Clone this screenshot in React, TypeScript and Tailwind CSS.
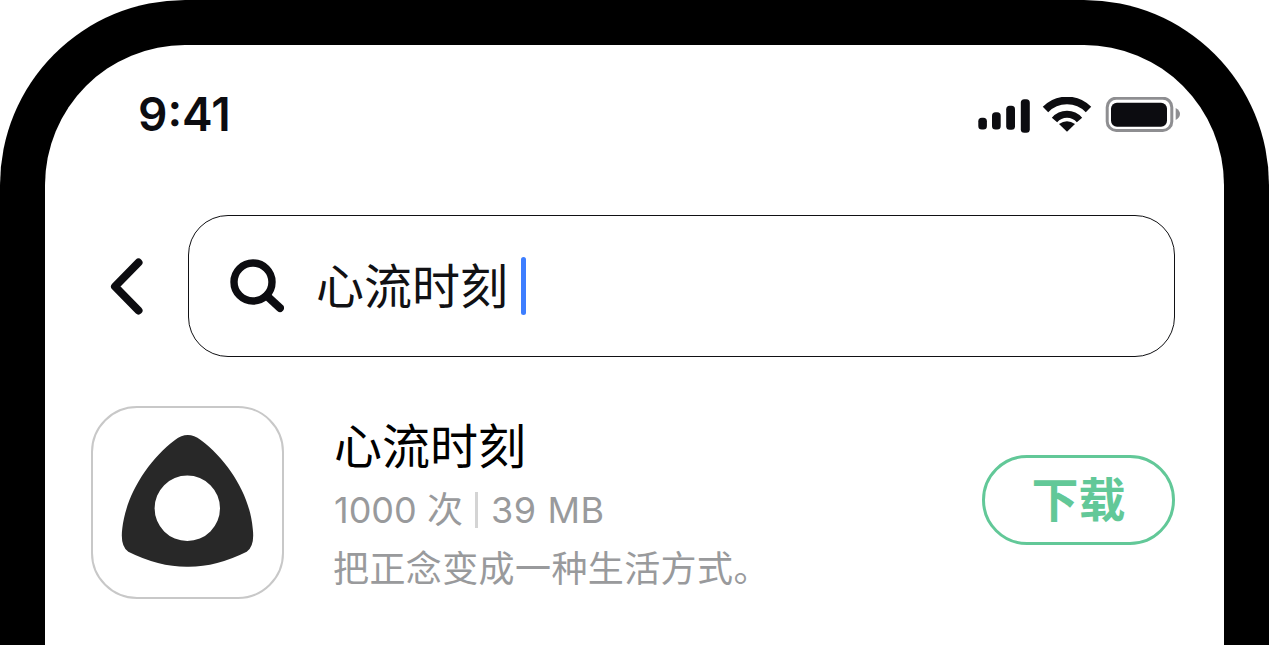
export default function App() {
  return (
    <div className="w-[1269px] h-[645px] overflow-hidden bg-white font-['Inter','Noto_Sans_CJK_SC',sans-serif]">
      <div className="h-full rounded-t-[185px] bg-black px-[45px] pt-[45px]">
        <div className="h-[600px] rounded-t-[140px] bg-white">
          {/* status bar */}
          <div className="h-[170px] pl-[93px] pr-[44px] pt-[44px] flex items-start justify-between">
            <span className="text-[46px] leading-[50px] font-semibold text-[#0c0c10]">9:41</span>
            <svg className="mt-[8px]" width="202" height="36" viewBox="978 97 202 36">
              <rect x="978.3" y="117.7" width="8.6" height="11.8" rx="3.5" fill="#0c0c10" />
              <rect x="992" y="112.3" width="8.7" height="17.2" rx="3.5" fill="#0c0c10" />
              <rect x="1006.2" y="105.7" width="8.8" height="24" rx="3.5" fill="#0c0c10" />
              <rect x="1020.8" y="99.3" width="9" height="33.4" rx="3.5" fill="#0c0c10" />
              <path d="M1045.5 109.5 A30 30 0 0 1 1088.5 109.5" fill="none" stroke="#0c0c10" strokeWidth="7.6" />
              <path d="M1054.5 120 A16.5 16.5 0 0 1 1079.5 120" fill="none" stroke="#0c0c10" strokeWidth="7" />
              <path d="M1067 131.7 L1059 124 Q1067 118.5 1075 124 Z" fill="#0c0c10" />
              <rect x="1107.2" y="98.2" width="64.6" height="32.2" rx="9" fill="none" stroke="#8e8e91" strokeWidth="3" />
              <rect x="1111" y="102.7" width="56" height="24" rx="6" fill="#0c0c10" />
              <path d="M1175.7 108 Q1180 110.5 1180 114 Q1180 117.5 1175.7 120 Z" fill="#8e8e91" />
            </svg>
          </div>

          {/* search row */}
          <div className="flex items-center pl-[65px] pr-[49px]">
            <svg className="mr-[45px] shrink-0" width="33" height="57" viewBox="0 0 33 57">
              <path d="M28.5 4.5 L5 28.5 L28.5 52.5" fill="none" stroke="#0c0c10" strokeWidth="8" strokeLinecap="round" strokeLinejoin="round" />
            </svg>
            <div className="flex-1 h-[142px] rounded-[40px] border-[1.5px] border-[#111114] flex items-center pl-[41px]">
              <svg className="shrink-0" width="54" height="54" viewBox="0 0 54 54">
                <circle cx="23" cy="23" r="19" fill="none" stroke="#0c0c10" strokeWidth="7.4" />
                <path d="M37 37 L50 49" fill="none" stroke="#0c0c10" strokeWidth="8" strokeLinecap="round" />
              </svg>
              <span className="ml-[32px] mt-[2px] text-[48px] leading-[58px] text-[#111114]">心流时刻</span>
              <div className="ml-[13px] w-[4.5px] h-[58px] rounded-full bg-[#3d7eff]" />
            </div>
          </div>

          {/* app row */}
          <div className="mt-[49px] flex items-start pl-[46px] pr-[49px]">
            <div className="w-[193px] h-[193px] shrink-0 rounded-[46px] border-2 border-[#c8c8c8] relative">
              <svg className="absolute -left-[2px] -top-[2px]" width="193" height="193" viewBox="0 0 193 193">
                <path
                  fillRule="evenodd"
                  fill="#282828"
                  d="M84 34 Q96.7 24 109.7 34 C138 55 159 90 161.7 122.3 Q164 140 155.7 145.7 Q125 161 96.7 160.7 Q68 161 37.3 145.7 Q29 140 31.3 122.3 C35 90 56 55 84 34 Z M96.3 69.6 A32.7 32.7 0 1 0 96.3 135 A32.7 32.7 0 1 0 96.3 69.6 Z"
                />
              </svg>
            </div>
            <div className="ml-[50px] mt-[12px] flex-1 flex flex-col">
              <div className="text-[48px] leading-[58px] text-black">心流时刻</div>
              <div className="mt-[12px] flex items-center text-[36px] leading-[44px] text-[#999a9c]">
                <span>1000 次</span>
                <div className="ml-[12px] mr-[13px] w-[3px] h-[36px] bg-[#d4d4d4]" />
                <span className="tracking-[0.6px]">39 MB</span>
              </div>
              <div className="mt-[15px] -ml-px text-[36px] leading-[44px] tracking-[0.4px] text-[#999a9c]">把正念变成一种生活方式。</div>
            </div>
            <div className="mt-[49px] w-[193px] h-[90px] shrink-0 rounded-full border-[3px] border-[#62c898] flex items-center justify-center text-[47px] font-semibold leading-[50px] text-[#62c898]">
              下载
            </div>
          </div>
        </div>
      </div>
    </div>
  );
}
